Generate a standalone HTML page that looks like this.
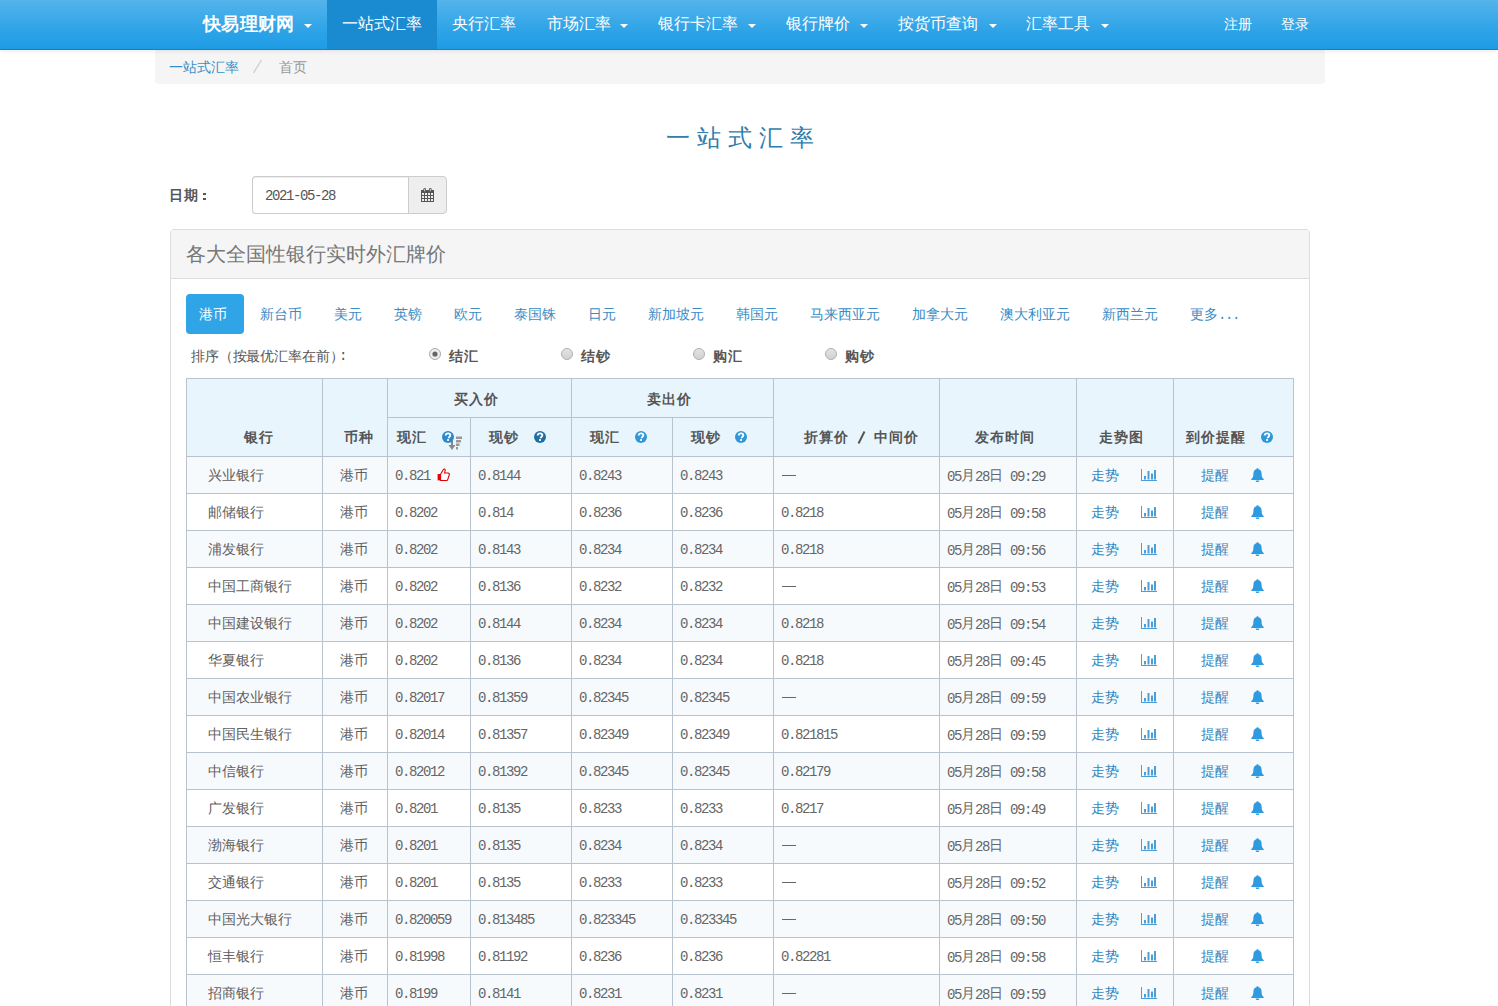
<!DOCTYPE html>
<html><head><meta charset="utf-8"><title>一站式汇率</title>
<style>
html,body{margin:0;padding:0;background:#fff;width:1498px;height:1006px;overflow:hidden;position:relative}
.t{position:absolute;white-space:nowrap}
.m{font-family:'Liberation Mono',monospace;font-size:14px;line-height:14px;letter-spacing:-1.4px}
.m .cj{font-family:'Liberation Sans',sans-serif;letter-spacing:0;position:relative;top:-1px}
.r{position:absolute;box-sizing:border-box}
svg{position:absolute}
</style></head><body>

<div class="r" style="left:0px;top:0px;width:1498px;height:50px;background:linear-gradient(#54b4eb,#2fa4e7 60%,#1d9ce5);border-bottom:1px solid #1a7dbf;box-shadow:0 1px 5px rgba(0,0,0,0.09);z-index:5"></div>
<div class="r" style="left:327px;top:0px;width:110px;height:49px;background:#1a8bd0;z-index:6"></div>
<div class="t" style="z-index:7;left:203px;top:15px;font-size:18px;line-height:18px;color:#fff;font-weight:600;font-family:'Liberation Sans',sans-serif;letter-spacing:0.3px">快易理财网</div>
<div class="r" style="z-index:7;left:304px;top:24px;width:0;height:0;border-left:4px solid transparent;border-right:4px solid transparent;border-top:4px solid #fff"></div>
<div class="t" style="z-index:7;left:342px;top:16px;font-size:16px;line-height:16px;color:#fff;font-weight:normal;font-family:'Liberation Sans',sans-serif;">一站式汇率</div>
<div class="t" style="z-index:7;left:452px;top:16px;font-size:16px;line-height:16px;color:#fff;font-weight:normal;font-family:'Liberation Sans',sans-serif;">央行汇率</div>
<div class="t" style="z-index:7;left:547px;top:16px;font-size:16px;line-height:16px;color:#fff;font-weight:normal;font-family:'Liberation Sans',sans-serif;">市场汇率</div>
<div class="r" style="z-index:7;left:620px;top:24px;width:0;height:0;border-left:4px solid transparent;border-right:4px solid transparent;border-top:4px solid #fff"></div>
<div class="t" style="z-index:7;left:658px;top:16px;font-size:16px;line-height:16px;color:#fff;font-weight:normal;font-family:'Liberation Sans',sans-serif;">银行卡汇率</div>
<div class="r" style="z-index:7;left:748px;top:24px;width:0;height:0;border-left:4px solid transparent;border-right:4px solid transparent;border-top:4px solid #fff"></div>
<div class="t" style="z-index:7;left:786px;top:16px;font-size:16px;line-height:16px;color:#fff;font-weight:normal;font-family:'Liberation Sans',sans-serif;">银行牌价</div>
<div class="r" style="z-index:7;left:860px;top:24px;width:0;height:0;border-left:4px solid transparent;border-right:4px solid transparent;border-top:4px solid #fff"></div>
<div class="t" style="z-index:7;left:898px;top:16px;font-size:16px;line-height:16px;color:#fff;font-weight:normal;font-family:'Liberation Sans',sans-serif;">按货币查询</div>
<div class="r" style="z-index:7;left:989px;top:24px;width:0;height:0;border-left:4px solid transparent;border-right:4px solid transparent;border-top:4px solid #fff"></div>
<div class="t" style="z-index:7;left:1026px;top:16px;font-size:16px;line-height:16px;color:#fff;font-weight:normal;font-family:'Liberation Sans',sans-serif;">汇率工具</div>
<div class="r" style="z-index:7;left:1101px;top:24px;width:0;height:0;border-left:4px solid transparent;border-right:4px solid transparent;border-top:4px solid #fff"></div>
<div class="t" style="z-index:7;left:1224px;top:17px;font-size:14px;line-height:14px;color:#fff;font-weight:normal;font-family:'Liberation Sans',sans-serif;">注册</div>
<div class="t" style="z-index:7;left:1281px;top:17px;font-size:14px;line-height:14px;color:#fff;font-weight:normal;font-family:'Liberation Sans',sans-serif;">登录</div>
<div class="r" style="left:155px;top:50px;width:1170px;height:34px;background:#f5f5f5;border-radius:0 0 4px 4px"></div>
<div class="t" style="z-index:7;left:169px;top:60px;font-size:14px;line-height:14px;color:#3a8fc8;font-weight:normal;font-family:'Liberation Sans',sans-serif;">一站式汇率</div>
<svg style="left:252px;top:59px;z-index:7" width="11" height="15" viewBox="0 0 11 15"><path d="M9.5 1 1.5 14" stroke="#d0d0d0" stroke-width="1.4"/></svg>
<div class="t" style="z-index:7;left:279px;top:60px;font-size:14px;line-height:14px;color:#999;font-weight:normal;font-family:'Liberation Sans',sans-serif;">首页</div>
<div class="t" style="z-index:7;left:666px;top:126px;font-size:24px;line-height:24px;color:#317eac;font-weight:normal;font-family:'Liberation Sans',sans-serif;letter-spacing:7px">一站式汇率</div>
<div class="t" style="z-index:7;left:169px;top:188px;font-size:14px;line-height:14px;color:#555;font-weight:bold;font-family:'Liberation Sans',sans-serif;letter-spacing:1px">日期</div>
<div class="r" style="left:203px;top:193px;width:3px;height:2px;background:#555"></div>
<div class="r" style="left:203px;top:198px;width:3px;height:2px;background:#555"></div>
<div class="r" style="left:252px;top:176px;width:157px;height:38px;background:#fff;border:1px solid #ccc;border-right:0;border-radius:4px 0 0 4px;box-shadow:inset 0 1px 1px rgba(0,0,0,.075)"></div>
<div class="r" style="left:408px;top:176px;width:39px;height:38px;background:#eee;border:1px solid #ccc;border-radius:0 4px 4px 0"></div>
<div class="t m" style="left:265px;top:189px;color:#555;">2021-05-28</div>
<svg style="left:421px;top:188px" width="13" height="14" viewBox="0 0 13 14"><rect x="0" y="2" width="13" height="12" fill="#555"/><rect x="2.4" y="0" width="2.6" height="4.2" rx="1.3" fill="#555"/><rect x="8" y="0" width="2.6" height="4.2" rx="1.3" fill="#555"/><rect x="3.3" y="0.9" width="0.8" height="2.4" fill="#eee"/><rect x="8.9" y="0.9" width="0.8" height="2.4" fill="#eee"/><rect x="1" y="5" width="2" height="2" fill="#eee"/><rect x="4" y="5" width="2" height="2" fill="#eee"/><rect x="7" y="5" width="2" height="2" fill="#eee"/><rect x="10" y="5" width="2" height="2" fill="#eee"/><rect x="1" y="8" width="2" height="2" fill="#eee"/><rect x="4" y="8" width="2" height="2" fill="#eee"/><rect x="7" y="8" width="2" height="2" fill="#eee"/><rect x="10" y="8" width="2" height="2" fill="#eee"/><rect x="1" y="11" width="2" height="2" fill="#eee"/><rect x="4" y="11" width="2" height="2" fill="#eee"/><rect x="7" y="11" width="2" height="2" fill="#eee"/><rect x="10" y="11" width="2" height="2" fill="#eee"/></svg>
<div class="r" style="left:170px;top:229px;width:1140px;height:800px;border:1px solid #ddd;border-radius:4px;background:#fff"></div>
<div class="r" style="left:171px;top:230px;width:1138px;height:49px;background:#f5f5f5;border-bottom:1px solid #ddd;border-radius:3px 3px 0 0"></div>
<div class="t" style="z-index:7;left:186px;top:244px;font-size:20px;line-height:20px;color:#777;font-weight:normal;font-family:'Liberation Sans',sans-serif;">各大全国性银行实时外汇牌价</div>
<div class="r" style="left:186px;top:294px;width:58px;height:40px;background:#2fa4e7;border-radius:4px"></div>
<div class="t" style="z-index:7;left:199px;top:307px;font-size:14px;line-height:14px;color:#fff;font-weight:normal;font-family:'Liberation Sans',sans-serif;">港币</div>
<div class="t" style="z-index:7;left:260px;top:307px;font-size:14px;line-height:14px;color:#3a8cc4;font-weight:normal;font-family:'Liberation Sans',sans-serif;">新台币</div>
<div class="t" style="z-index:7;left:334px;top:307px;font-size:14px;line-height:14px;color:#3a8cc4;font-weight:normal;font-family:'Liberation Sans',sans-serif;">美元</div>
<div class="t" style="z-index:7;left:394px;top:307px;font-size:14px;line-height:14px;color:#3a8cc4;font-weight:normal;font-family:'Liberation Sans',sans-serif;">英镑</div>
<div class="t" style="z-index:7;left:454px;top:307px;font-size:14px;line-height:14px;color:#3a8cc4;font-weight:normal;font-family:'Liberation Sans',sans-serif;">欧元</div>
<div class="t" style="z-index:7;left:514px;top:307px;font-size:14px;line-height:14px;color:#3a8cc4;font-weight:normal;font-family:'Liberation Sans',sans-serif;">泰国铢</div>
<div class="t" style="z-index:7;left:588px;top:307px;font-size:14px;line-height:14px;color:#3a8cc4;font-weight:normal;font-family:'Liberation Sans',sans-serif;">日元</div>
<div class="t" style="z-index:7;left:648px;top:307px;font-size:14px;line-height:14px;color:#3a8cc4;font-weight:normal;font-family:'Liberation Sans',sans-serif;">新加坡元</div>
<div class="t" style="z-index:7;left:736px;top:307px;font-size:14px;line-height:14px;color:#3a8cc4;font-weight:normal;font-family:'Liberation Sans',sans-serif;">韩国元</div>
<div class="t" style="z-index:7;left:810px;top:307px;font-size:14px;line-height:14px;color:#3a8cc4;font-weight:normal;font-family:'Liberation Sans',sans-serif;">马来西亚元</div>
<div class="t" style="z-index:7;left:912px;top:307px;font-size:14px;line-height:14px;color:#3a8cc4;font-weight:normal;font-family:'Liberation Sans',sans-serif;">加拿大元</div>
<div class="t" style="z-index:7;left:1000px;top:307px;font-size:14px;line-height:14px;color:#3a8cc4;font-weight:normal;font-family:'Liberation Sans',sans-serif;">澳大利亚元</div>
<div class="t" style="z-index:7;left:1102px;top:307px;font-size:14px;line-height:14px;color:#3a8cc4;font-weight:normal;font-family:'Liberation Sans',sans-serif;">新西兰元</div>
<div class="t" style="z-index:7;left:1190px;top:307px;font-size:14px;line-height:14px;color:#3a8cc4;font-weight:normal;font-family:'Liberation Sans',sans-serif;">更多<span style="font-family:Liberation Mono,monospace;letter-spacing:-1.4px">...</span></div>
<div class="t" style="z-index:7;left:191px;top:349px;font-size:14px;line-height:14px;color:#555;font-weight:normal;font-family:'Liberation Sans',sans-serif;letter-spacing:-0.15px">排序（按最优汇率在前）</div>
<div class="t" style="z-index:7;left:339px;top:349px;font-size:14px;line-height:14px;color:#555;font-weight:normal;font-family:'Liberation Mono',monospace;">:</div>
<svg style="left:429px;top:348px" width="12" height="12" viewBox="0 0 12 12"><circle cx="6" cy="6" r="5.5" fill="#eee" stroke="#aaa"/><circle cx="6" cy="6" r="2.6" fill="#666"/></svg>
<div class="t" style="z-index:7;left:449px;top:349px;font-size:14px;line-height:14px;color:#555;font-weight:bold;font-family:'Liberation Sans',sans-serif;letter-spacing:1px">结汇</div>
<svg style="left:561px;top:348px" width="12" height="12" viewBox="0 0 12 12"><defs><linearGradient id="g1" x1="0" y1="0" x2="0" y2="1"><stop offset="0" stop-color="#e4e4e4"/><stop offset="1" stop-color="#d0d0d0"/></linearGradient></defs><circle cx="6" cy="6" r="5.5" fill="url(#g1)" stroke="#b0b0b0"/></svg>
<div class="t" style="z-index:7;left:581px;top:349px;font-size:14px;line-height:14px;color:#555;font-weight:bold;font-family:'Liberation Sans',sans-serif;letter-spacing:1px">结钞</div>
<svg style="left:693px;top:348px" width="12" height="12" viewBox="0 0 12 12"><defs><linearGradient id="g2" x1="0" y1="0" x2="0" y2="1"><stop offset="0" stop-color="#e4e4e4"/><stop offset="1" stop-color="#d0d0d0"/></linearGradient></defs><circle cx="6" cy="6" r="5.5" fill="url(#g2)" stroke="#b0b0b0"/></svg>
<div class="t" style="z-index:7;left:713px;top:349px;font-size:14px;line-height:14px;color:#555;font-weight:bold;font-family:'Liberation Sans',sans-serif;letter-spacing:1px">购汇</div>
<svg style="left:825px;top:348px" width="12" height="12" viewBox="0 0 12 12"><defs><linearGradient id="g3" x1="0" y1="0" x2="0" y2="1"><stop offset="0" stop-color="#e4e4e4"/><stop offset="1" stop-color="#d0d0d0"/></linearGradient></defs><circle cx="6" cy="6" r="5.5" fill="url(#g3)" stroke="#b0b0b0"/></svg>
<div class="t" style="z-index:7;left:845px;top:349px;font-size:14px;line-height:14px;color:#555;font-weight:bold;font-family:'Liberation Sans',sans-serif;letter-spacing:1px">购钞</div>
<div class="r" style="left:186px;top:378px;width:1108px;height:78px;background:#e9f5fd"></div>
<div class="r" style="left:186px;top:456px;width:1108px;height:37px;background:#f7fafd"></div>
<div class="r" style="left:186px;top:493px;width:1108px;height:37px;background:#fff"></div>
<div class="r" style="left:186px;top:530px;width:1108px;height:37px;background:#f7fafd"></div>
<div class="r" style="left:186px;top:567px;width:1108px;height:37px;background:#fff"></div>
<div class="r" style="left:186px;top:604px;width:1108px;height:37px;background:#f7fafd"></div>
<div class="r" style="left:186px;top:641px;width:1108px;height:37px;background:#fff"></div>
<div class="r" style="left:186px;top:678px;width:1108px;height:37px;background:#f7fafd"></div>
<div class="r" style="left:186px;top:715px;width:1108px;height:37px;background:#fff"></div>
<div class="r" style="left:186px;top:752px;width:1108px;height:37px;background:#f7fafd"></div>
<div class="r" style="left:186px;top:789px;width:1108px;height:37px;background:#fff"></div>
<div class="r" style="left:186px;top:826px;width:1108px;height:37px;background:#f7fafd"></div>
<div class="r" style="left:186px;top:863px;width:1108px;height:37px;background:#fff"></div>
<div class="r" style="left:186px;top:900px;width:1108px;height:37px;background:#f7fafd"></div>
<div class="r" style="left:186px;top:937px;width:1108px;height:37px;background:#fff"></div>
<div class="r" style="left:186px;top:974px;width:1108px;height:37px;background:#f7fafd"></div>
<div class="r" style="left:186px;top:378px;width:1108px;height:1px;background:#b8c3cd"></div>
<div class="r" style="left:387px;top:417px;width:386px;height:1px;background:#b8c3cd"></div>
<div class="r" style="left:186px;top:456px;width:1108px;height:1px;background:#b8c3cd"></div>
<div class="r" style="left:186px;top:493px;width:1108px;height:1px;background:#b8c3cd"></div>
<div class="r" style="left:186px;top:530px;width:1108px;height:1px;background:#b8c3cd"></div>
<div class="r" style="left:186px;top:567px;width:1108px;height:1px;background:#b8c3cd"></div>
<div class="r" style="left:186px;top:604px;width:1108px;height:1px;background:#b8c3cd"></div>
<div class="r" style="left:186px;top:641px;width:1108px;height:1px;background:#b8c3cd"></div>
<div class="r" style="left:186px;top:678px;width:1108px;height:1px;background:#b8c3cd"></div>
<div class="r" style="left:186px;top:715px;width:1108px;height:1px;background:#b8c3cd"></div>
<div class="r" style="left:186px;top:752px;width:1108px;height:1px;background:#b8c3cd"></div>
<div class="r" style="left:186px;top:789px;width:1108px;height:1px;background:#b8c3cd"></div>
<div class="r" style="left:186px;top:826px;width:1108px;height:1px;background:#b8c3cd"></div>
<div class="r" style="left:186px;top:863px;width:1108px;height:1px;background:#b8c3cd"></div>
<div class="r" style="left:186px;top:900px;width:1108px;height:1px;background:#b8c3cd"></div>
<div class="r" style="left:186px;top:937px;width:1108px;height:1px;background:#b8c3cd"></div>
<div class="r" style="left:186px;top:974px;width:1108px;height:1px;background:#b8c3cd"></div>
<div class="r" style="left:186px;top:1011px;width:1108px;height:1px;background:#b8c3cd"></div>
<div class="r" style="left:186px;top:378px;width:1px;height:628px;background:#b8c3cd"></div>
<div class="r" style="left:322px;top:378px;width:1px;height:628px;background:#b8c3cd"></div>
<div class="r" style="left:387px;top:378px;width:1px;height:628px;background:#b8c3cd"></div>
<div class="r" style="left:470px;top:417px;width:1px;height:589px;background:#b8c3cd"></div>
<div class="r" style="left:571px;top:378px;width:1px;height:628px;background:#b8c3cd"></div>
<div class="r" style="left:672px;top:417px;width:1px;height:589px;background:#b8c3cd"></div>
<div class="r" style="left:773px;top:378px;width:1px;height:628px;background:#b8c3cd"></div>
<div class="r" style="left:939px;top:378px;width:1px;height:628px;background:#b8c3cd"></div>
<div class="r" style="left:1076px;top:378px;width:1px;height:628px;background:#b8c3cd"></div>
<div class="r" style="left:1173px;top:378px;width:1px;height:628px;background:#b8c3cd"></div>
<div class="r" style="left:1293px;top:378px;width:1px;height:628px;background:#b8c3cd"></div>
<div class="t" style="z-index:7;left:244px;top:430px;font-size:14px;line-height:14px;color:#555;font-weight:bold;font-family:'Liberation Sans',sans-serif;letter-spacing:1px">银行</div>
<div class="t" style="z-index:7;left:344px;top:430px;font-size:14px;line-height:14px;color:#555;font-weight:bold;font-family:'Liberation Sans',sans-serif;letter-spacing:1px">币种</div>
<div class="t" style="z-index:7;left:454px;top:392px;font-size:14px;line-height:14px;color:#555;font-weight:bold;font-family:'Liberation Sans',sans-serif;letter-spacing:1px">买入价</div>
<div class="t" style="z-index:7;left:647px;top:392px;font-size:14px;line-height:14px;color:#555;font-weight:bold;font-family:'Liberation Sans',sans-serif;letter-spacing:1px">卖出价</div>
<div class="t" style="z-index:7;left:397px;top:430px;font-size:14px;line-height:14px;color:#555;font-weight:bold;font-family:'Liberation Sans',sans-serif;letter-spacing:1px">现汇</div>
<svg style="left:447px;top:436px" width="16" height="15" viewBox="0 0 16 15"><path d="M4 0v9H1.5L5 14l3.5-5H6V0z" fill="#888"/><rect x="9" y="0.5" width="6" height="2.5" fill="#999"/><rect x="9" y="4" width="5" height="2.5" fill="#999"/><rect x="9" y="7.5" width="3.5" height="2.5" fill="#999"/><rect x="9" y="11" width="2" height="2.5" fill="#999"/></svg>
<svg style="left:442px;top:431px" width="12" height="12" viewBox="0 0 12 12"><circle cx="6" cy="6" r="6" fill="#2f88c8"/><path d="M3.7 4.5c.1-1.4 1-2.1 2.3-2.1 1.4 0 2.3.8 2.3 1.9 0 1.5-1.6 1.6-1.6 2.6v.3" stroke="#fff" stroke-width="1.9" fill="none"/><rect x="5.1" y="8.1" width="1.9" height="1.8" fill="#fff"/></svg>
<div class="t" style="z-index:7;left:489px;top:430px;font-size:14px;line-height:14px;color:#555;font-weight:bold;font-family:'Liberation Sans',sans-serif;letter-spacing:1px">现钞</div>
<svg style="left:534px;top:431px" width="12" height="12" viewBox="0 0 12 12"><circle cx="6" cy="6" r="6" fill="#1f6fa5"/><path d="M3.7 4.5c.1-1.4 1-2.1 2.3-2.1 1.4 0 2.3.8 2.3 1.9 0 1.5-1.6 1.6-1.6 2.6v.3" stroke="#fff" stroke-width="1.9" fill="none"/><rect x="5.1" y="8.1" width="1.9" height="1.8" fill="#fff"/></svg>
<div class="t" style="z-index:7;left:590px;top:430px;font-size:14px;line-height:14px;color:#555;font-weight:bold;font-family:'Liberation Sans',sans-serif;letter-spacing:1px">现汇</div>
<svg style="left:635px;top:431px" width="12" height="12" viewBox="0 0 12 12"><circle cx="6" cy="6" r="6" fill="#3196d8"/><path d="M3.7 4.5c.1-1.4 1-2.1 2.3-2.1 1.4 0 2.3.8 2.3 1.9 0 1.5-1.6 1.6-1.6 2.6v.3" stroke="#fff" stroke-width="1.9" fill="none"/><rect x="5.1" y="8.1" width="1.9" height="1.8" fill="#fff"/></svg>
<div class="t" style="z-index:7;left:691px;top:430px;font-size:14px;line-height:14px;color:#555;font-weight:bold;font-family:'Liberation Sans',sans-serif;letter-spacing:1px">现钞</div>
<svg style="left:735px;top:431px" width="12" height="12" viewBox="0 0 12 12"><circle cx="6" cy="6" r="6" fill="#3196d8"/><path d="M3.7 4.5c.1-1.4 1-2.1 2.3-2.1 1.4 0 2.3.8 2.3 1.9 0 1.5-1.6 1.6-1.6 2.6v.3" stroke="#fff" stroke-width="1.9" fill="none"/><rect x="5.1" y="8.1" width="1.9" height="1.8" fill="#fff"/></svg>
<div class="t" style="z-index:7;left:804px;top:430px;font-size:14px;line-height:14px;color:#555;font-weight:bold;font-family:'Liberation Sans',sans-serif;letter-spacing:1px">折算价</div>
<svg style="left:857px;top:431px" width="9" height="13" viewBox="0 0 9 13"><path d="M7.5 0.5 1.5 12.5" stroke="#555" stroke-width="2"/></svg>
<div class="t" style="z-index:7;left:874px;top:430px;font-size:14px;line-height:14px;color:#555;font-weight:bold;font-family:'Liberation Sans',sans-serif;letter-spacing:1px">中间价</div>
<div class="t" style="z-index:7;left:975px;top:430px;font-size:14px;line-height:14px;color:#555;font-weight:bold;font-family:'Liberation Sans',sans-serif;letter-spacing:1px">发布时间</div>
<div class="t" style="z-index:7;left:1099px;top:430px;font-size:14px;line-height:14px;color:#555;font-weight:bold;font-family:'Liberation Sans',sans-serif;letter-spacing:1px">走势图</div>
<div class="t" style="z-index:7;left:1186px;top:430px;font-size:14px;line-height:14px;color:#555;font-weight:bold;font-family:'Liberation Sans',sans-serif;letter-spacing:1px">到价提醒</div>
<svg style="left:1261px;top:431px" width="12" height="12" viewBox="0 0 12 12"><circle cx="6" cy="6" r="6" fill="#3196d8"/><path d="M3.7 4.5c.1-1.4 1-2.1 2.3-2.1 1.4 0 2.3.8 2.3 1.9 0 1.5-1.6 1.6-1.6 2.6v.3" stroke="#fff" stroke-width="1.9" fill="none"/><rect x="5.1" y="8.1" width="1.9" height="1.8" fill="#fff"/></svg>
<div class="t" style="z-index:7;left:208px;top:468px;font-size:14px;line-height:14px;color:#606060;font-weight:normal;font-family:'Liberation Sans',sans-serif;">兴业银行</div>
<div class="t" style="z-index:7;left:340px;top:468px;font-size:14px;line-height:14px;color:#606060;font-weight:normal;font-family:'Liberation Sans',sans-serif;">港币</div>
<div class="t m" style="left:395px;top:469px;color:#666;">0.821</div>
<svg style="left:437px;top:468px" width="13" height="13" viewBox="0 0 13 13"><path d="M0.6 6h2.6v6.4H0.6z" fill="#e00"/><path d="M3.6 6.2 6.4 1.6c.4-.9 1.9-.7 1.8.6L7.6 5h3.4c1.2 0 1.6 1 1.3 1.8l-1.6 4.8c-.3.7-.8 1-1.4 1H3.6z" fill="#fff" stroke="#d00" stroke-width="1.1"/></svg>
<div class="t m" style="left:478px;top:469px;color:#666;">0.8144</div>
<div class="t m" style="left:579px;top:469px;color:#666;">0.8243</div>
<div class="t m" style="left:680px;top:469px;color:#666;">0.8243</div>
<div class="r" style="left:782px;top:475px;width:14px;height:1px;background:#666"></div>
<div class="t m" style="left:947px;top:469px;color:#666;">05<span class="cj">月</span>28<span class="cj">日</span>&#160;09:29</div>
<div class="t" style="z-index:7;left:1091px;top:468px;font-size:14px;line-height:14px;color:#3585bd;font-weight:normal;font-family:'Liberation Sans',sans-serif;">走势</div>
<svg style="left:1141px;top:469px" width="16" height="12" viewBox="0 0 16 12"><path d="M0 0h1v11H16V12H0z" fill="#4a9fd8"/><rect x="3" y="7" width="2" height="3.5" fill="#4a9fd8"/><rect x="6.5" y="2" width="2" height="8.5" fill="#4a9fd8"/><rect x="10" y="4.5" width="2" height="6" fill="#4a9fd8"/><rect x="13" y="1" width="2" height="9.5" fill="#4a9fd8"/></svg>
<div class="t" style="z-index:7;left:1201px;top:468px;font-size:14px;line-height:14px;color:#3585bd;font-weight:normal;font-family:'Liberation Sans',sans-serif;">提醒</div>
<svg style="left:1251px;top:468px" width="13" height="14" viewBox="0 0 13 14"><path d="M6.5 0.2c.7 0 1.1.5 1.1 1.1 2 .5 3 2.2 3 4.4 0 3 .8 4.3 2.2 5.6v.8H.2v-.8C1.6 10 2.4 8.7 2.4 5.7c0-2.2 1-3.9 3-4.4 0-.6.4-1.1 1.1-1.1z" fill="#2e9be0"/><path d="M4.6 12.6h3.8a1.9 1.6 0 0 1-3.8 0z" fill="#2e9be0"/></svg>
<div class="t" style="z-index:7;left:208px;top:505px;font-size:14px;line-height:14px;color:#606060;font-weight:normal;font-family:'Liberation Sans',sans-serif;">邮储银行</div>
<div class="t" style="z-index:7;left:340px;top:505px;font-size:14px;line-height:14px;color:#606060;font-weight:normal;font-family:'Liberation Sans',sans-serif;">港币</div>
<div class="t m" style="left:395px;top:506px;color:#666;">0.8202</div>
<div class="t m" style="left:478px;top:506px;color:#666;">0.814</div>
<div class="t m" style="left:579px;top:506px;color:#666;">0.8236</div>
<div class="t m" style="left:680px;top:506px;color:#666;">0.8236</div>
<div class="t m" style="left:781px;top:506px;color:#666;">0.8218</div>
<div class="t m" style="left:947px;top:506px;color:#666;">05<span class="cj">月</span>28<span class="cj">日</span>&#160;09:58</div>
<div class="t" style="z-index:7;left:1091px;top:505px;font-size:14px;line-height:14px;color:#3585bd;font-weight:normal;font-family:'Liberation Sans',sans-serif;">走势</div>
<svg style="left:1141px;top:506px" width="16" height="12" viewBox="0 0 16 12"><path d="M0 0h1v11H16V12H0z" fill="#4a9fd8"/><rect x="3" y="7" width="2" height="3.5" fill="#4a9fd8"/><rect x="6.5" y="2" width="2" height="8.5" fill="#4a9fd8"/><rect x="10" y="4.5" width="2" height="6" fill="#4a9fd8"/><rect x="13" y="1" width="2" height="9.5" fill="#4a9fd8"/></svg>
<div class="t" style="z-index:7;left:1201px;top:505px;font-size:14px;line-height:14px;color:#3585bd;font-weight:normal;font-family:'Liberation Sans',sans-serif;">提醒</div>
<svg style="left:1251px;top:505px" width="13" height="14" viewBox="0 0 13 14"><path d="M6.5 0.2c.7 0 1.1.5 1.1 1.1 2 .5 3 2.2 3 4.4 0 3 .8 4.3 2.2 5.6v.8H.2v-.8C1.6 10 2.4 8.7 2.4 5.7c0-2.2 1-3.9 3-4.4 0-.6.4-1.1 1.1-1.1z" fill="#2e9be0"/><path d="M4.6 12.6h3.8a1.9 1.6 0 0 1-3.8 0z" fill="#2e9be0"/></svg>
<div class="t" style="z-index:7;left:208px;top:542px;font-size:14px;line-height:14px;color:#606060;font-weight:normal;font-family:'Liberation Sans',sans-serif;">浦发银行</div>
<div class="t" style="z-index:7;left:340px;top:542px;font-size:14px;line-height:14px;color:#606060;font-weight:normal;font-family:'Liberation Sans',sans-serif;">港币</div>
<div class="t m" style="left:395px;top:543px;color:#666;">0.8202</div>
<div class="t m" style="left:478px;top:543px;color:#666;">0.8143</div>
<div class="t m" style="left:579px;top:543px;color:#666;">0.8234</div>
<div class="t m" style="left:680px;top:543px;color:#666;">0.8234</div>
<div class="t m" style="left:781px;top:543px;color:#666;">0.8218</div>
<div class="t m" style="left:947px;top:543px;color:#666;">05<span class="cj">月</span>28<span class="cj">日</span>&#160;09:56</div>
<div class="t" style="z-index:7;left:1091px;top:542px;font-size:14px;line-height:14px;color:#3585bd;font-weight:normal;font-family:'Liberation Sans',sans-serif;">走势</div>
<svg style="left:1141px;top:543px" width="16" height="12" viewBox="0 0 16 12"><path d="M0 0h1v11H16V12H0z" fill="#4a9fd8"/><rect x="3" y="7" width="2" height="3.5" fill="#4a9fd8"/><rect x="6.5" y="2" width="2" height="8.5" fill="#4a9fd8"/><rect x="10" y="4.5" width="2" height="6" fill="#4a9fd8"/><rect x="13" y="1" width="2" height="9.5" fill="#4a9fd8"/></svg>
<div class="t" style="z-index:7;left:1201px;top:542px;font-size:14px;line-height:14px;color:#3585bd;font-weight:normal;font-family:'Liberation Sans',sans-serif;">提醒</div>
<svg style="left:1251px;top:542px" width="13" height="14" viewBox="0 0 13 14"><path d="M6.5 0.2c.7 0 1.1.5 1.1 1.1 2 .5 3 2.2 3 4.4 0 3 .8 4.3 2.2 5.6v.8H.2v-.8C1.6 10 2.4 8.7 2.4 5.7c0-2.2 1-3.9 3-4.4 0-.6.4-1.1 1.1-1.1z" fill="#2e9be0"/><path d="M4.6 12.6h3.8a1.9 1.6 0 0 1-3.8 0z" fill="#2e9be0"/></svg>
<div class="t" style="z-index:7;left:208px;top:579px;font-size:14px;line-height:14px;color:#606060;font-weight:normal;font-family:'Liberation Sans',sans-serif;">中国工商银行</div>
<div class="t" style="z-index:7;left:340px;top:579px;font-size:14px;line-height:14px;color:#606060;font-weight:normal;font-family:'Liberation Sans',sans-serif;">港币</div>
<div class="t m" style="left:395px;top:580px;color:#666;">0.8202</div>
<div class="t m" style="left:478px;top:580px;color:#666;">0.8136</div>
<div class="t m" style="left:579px;top:580px;color:#666;">0.8232</div>
<div class="t m" style="left:680px;top:580px;color:#666;">0.8232</div>
<div class="r" style="left:782px;top:586px;width:14px;height:1px;background:#666"></div>
<div class="t m" style="left:947px;top:580px;color:#666;">05<span class="cj">月</span>28<span class="cj">日</span>&#160;09:53</div>
<div class="t" style="z-index:7;left:1091px;top:579px;font-size:14px;line-height:14px;color:#3585bd;font-weight:normal;font-family:'Liberation Sans',sans-serif;">走势</div>
<svg style="left:1141px;top:580px" width="16" height="12" viewBox="0 0 16 12"><path d="M0 0h1v11H16V12H0z" fill="#4a9fd8"/><rect x="3" y="7" width="2" height="3.5" fill="#4a9fd8"/><rect x="6.5" y="2" width="2" height="8.5" fill="#4a9fd8"/><rect x="10" y="4.5" width="2" height="6" fill="#4a9fd8"/><rect x="13" y="1" width="2" height="9.5" fill="#4a9fd8"/></svg>
<div class="t" style="z-index:7;left:1201px;top:579px;font-size:14px;line-height:14px;color:#3585bd;font-weight:normal;font-family:'Liberation Sans',sans-serif;">提醒</div>
<svg style="left:1251px;top:579px" width="13" height="14" viewBox="0 0 13 14"><path d="M6.5 0.2c.7 0 1.1.5 1.1 1.1 2 .5 3 2.2 3 4.4 0 3 .8 4.3 2.2 5.6v.8H.2v-.8C1.6 10 2.4 8.7 2.4 5.7c0-2.2 1-3.9 3-4.4 0-.6.4-1.1 1.1-1.1z" fill="#2e9be0"/><path d="M4.6 12.6h3.8a1.9 1.6 0 0 1-3.8 0z" fill="#2e9be0"/></svg>
<div class="t" style="z-index:7;left:208px;top:616px;font-size:14px;line-height:14px;color:#606060;font-weight:normal;font-family:'Liberation Sans',sans-serif;">中国建设银行</div>
<div class="t" style="z-index:7;left:340px;top:616px;font-size:14px;line-height:14px;color:#606060;font-weight:normal;font-family:'Liberation Sans',sans-serif;">港币</div>
<div class="t m" style="left:395px;top:617px;color:#666;">0.8202</div>
<div class="t m" style="left:478px;top:617px;color:#666;">0.8144</div>
<div class="t m" style="left:579px;top:617px;color:#666;">0.8234</div>
<div class="t m" style="left:680px;top:617px;color:#666;">0.8234</div>
<div class="t m" style="left:781px;top:617px;color:#666;">0.8218</div>
<div class="t m" style="left:947px;top:617px;color:#666;">05<span class="cj">月</span>28<span class="cj">日</span>&#160;09:54</div>
<div class="t" style="z-index:7;left:1091px;top:616px;font-size:14px;line-height:14px;color:#3585bd;font-weight:normal;font-family:'Liberation Sans',sans-serif;">走势</div>
<svg style="left:1141px;top:617px" width="16" height="12" viewBox="0 0 16 12"><path d="M0 0h1v11H16V12H0z" fill="#4a9fd8"/><rect x="3" y="7" width="2" height="3.5" fill="#4a9fd8"/><rect x="6.5" y="2" width="2" height="8.5" fill="#4a9fd8"/><rect x="10" y="4.5" width="2" height="6" fill="#4a9fd8"/><rect x="13" y="1" width="2" height="9.5" fill="#4a9fd8"/></svg>
<div class="t" style="z-index:7;left:1201px;top:616px;font-size:14px;line-height:14px;color:#3585bd;font-weight:normal;font-family:'Liberation Sans',sans-serif;">提醒</div>
<svg style="left:1251px;top:616px" width="13" height="14" viewBox="0 0 13 14"><path d="M6.5 0.2c.7 0 1.1.5 1.1 1.1 2 .5 3 2.2 3 4.4 0 3 .8 4.3 2.2 5.6v.8H.2v-.8C1.6 10 2.4 8.7 2.4 5.7c0-2.2 1-3.9 3-4.4 0-.6.4-1.1 1.1-1.1z" fill="#2e9be0"/><path d="M4.6 12.6h3.8a1.9 1.6 0 0 1-3.8 0z" fill="#2e9be0"/></svg>
<div class="t" style="z-index:7;left:208px;top:653px;font-size:14px;line-height:14px;color:#606060;font-weight:normal;font-family:'Liberation Sans',sans-serif;">华夏银行</div>
<div class="t" style="z-index:7;left:340px;top:653px;font-size:14px;line-height:14px;color:#606060;font-weight:normal;font-family:'Liberation Sans',sans-serif;">港币</div>
<div class="t m" style="left:395px;top:654px;color:#666;">0.8202</div>
<div class="t m" style="left:478px;top:654px;color:#666;">0.8136</div>
<div class="t m" style="left:579px;top:654px;color:#666;">0.8234</div>
<div class="t m" style="left:680px;top:654px;color:#666;">0.8234</div>
<div class="t m" style="left:781px;top:654px;color:#666;">0.8218</div>
<div class="t m" style="left:947px;top:654px;color:#666;">05<span class="cj">月</span>28<span class="cj">日</span>&#160;09:45</div>
<div class="t" style="z-index:7;left:1091px;top:653px;font-size:14px;line-height:14px;color:#3585bd;font-weight:normal;font-family:'Liberation Sans',sans-serif;">走势</div>
<svg style="left:1141px;top:654px" width="16" height="12" viewBox="0 0 16 12"><path d="M0 0h1v11H16V12H0z" fill="#4a9fd8"/><rect x="3" y="7" width="2" height="3.5" fill="#4a9fd8"/><rect x="6.5" y="2" width="2" height="8.5" fill="#4a9fd8"/><rect x="10" y="4.5" width="2" height="6" fill="#4a9fd8"/><rect x="13" y="1" width="2" height="9.5" fill="#4a9fd8"/></svg>
<div class="t" style="z-index:7;left:1201px;top:653px;font-size:14px;line-height:14px;color:#3585bd;font-weight:normal;font-family:'Liberation Sans',sans-serif;">提醒</div>
<svg style="left:1251px;top:653px" width="13" height="14" viewBox="0 0 13 14"><path d="M6.5 0.2c.7 0 1.1.5 1.1 1.1 2 .5 3 2.2 3 4.4 0 3 .8 4.3 2.2 5.6v.8H.2v-.8C1.6 10 2.4 8.7 2.4 5.7c0-2.2 1-3.9 3-4.4 0-.6.4-1.1 1.1-1.1z" fill="#2e9be0"/><path d="M4.6 12.6h3.8a1.9 1.6 0 0 1-3.8 0z" fill="#2e9be0"/></svg>
<div class="t" style="z-index:7;left:208px;top:690px;font-size:14px;line-height:14px;color:#606060;font-weight:normal;font-family:'Liberation Sans',sans-serif;">中国农业银行</div>
<div class="t" style="z-index:7;left:340px;top:690px;font-size:14px;line-height:14px;color:#606060;font-weight:normal;font-family:'Liberation Sans',sans-serif;">港币</div>
<div class="t m" style="left:395px;top:691px;color:#666;">0.82017</div>
<div class="t m" style="left:478px;top:691px;color:#666;">0.81359</div>
<div class="t m" style="left:579px;top:691px;color:#666;">0.82345</div>
<div class="t m" style="left:680px;top:691px;color:#666;">0.82345</div>
<div class="r" style="left:782px;top:697px;width:14px;height:1px;background:#666"></div>
<div class="t m" style="left:947px;top:691px;color:#666;">05<span class="cj">月</span>28<span class="cj">日</span>&#160;09:59</div>
<div class="t" style="z-index:7;left:1091px;top:690px;font-size:14px;line-height:14px;color:#3585bd;font-weight:normal;font-family:'Liberation Sans',sans-serif;">走势</div>
<svg style="left:1141px;top:691px" width="16" height="12" viewBox="0 0 16 12"><path d="M0 0h1v11H16V12H0z" fill="#4a9fd8"/><rect x="3" y="7" width="2" height="3.5" fill="#4a9fd8"/><rect x="6.5" y="2" width="2" height="8.5" fill="#4a9fd8"/><rect x="10" y="4.5" width="2" height="6" fill="#4a9fd8"/><rect x="13" y="1" width="2" height="9.5" fill="#4a9fd8"/></svg>
<div class="t" style="z-index:7;left:1201px;top:690px;font-size:14px;line-height:14px;color:#3585bd;font-weight:normal;font-family:'Liberation Sans',sans-serif;">提醒</div>
<svg style="left:1251px;top:690px" width="13" height="14" viewBox="0 0 13 14"><path d="M6.5 0.2c.7 0 1.1.5 1.1 1.1 2 .5 3 2.2 3 4.4 0 3 .8 4.3 2.2 5.6v.8H.2v-.8C1.6 10 2.4 8.7 2.4 5.7c0-2.2 1-3.9 3-4.4 0-.6.4-1.1 1.1-1.1z" fill="#2e9be0"/><path d="M4.6 12.6h3.8a1.9 1.6 0 0 1-3.8 0z" fill="#2e9be0"/></svg>
<div class="t" style="z-index:7;left:208px;top:727px;font-size:14px;line-height:14px;color:#606060;font-weight:normal;font-family:'Liberation Sans',sans-serif;">中国民生银行</div>
<div class="t" style="z-index:7;left:340px;top:727px;font-size:14px;line-height:14px;color:#606060;font-weight:normal;font-family:'Liberation Sans',sans-serif;">港币</div>
<div class="t m" style="left:395px;top:728px;color:#666;">0.82014</div>
<div class="t m" style="left:478px;top:728px;color:#666;">0.81357</div>
<div class="t m" style="left:579px;top:728px;color:#666;">0.82349</div>
<div class="t m" style="left:680px;top:728px;color:#666;">0.82349</div>
<div class="t m" style="left:781px;top:728px;color:#666;">0.821815</div>
<div class="t m" style="left:947px;top:728px;color:#666;">05<span class="cj">月</span>28<span class="cj">日</span>&#160;09:59</div>
<div class="t" style="z-index:7;left:1091px;top:727px;font-size:14px;line-height:14px;color:#3585bd;font-weight:normal;font-family:'Liberation Sans',sans-serif;">走势</div>
<svg style="left:1141px;top:728px" width="16" height="12" viewBox="0 0 16 12"><path d="M0 0h1v11H16V12H0z" fill="#4a9fd8"/><rect x="3" y="7" width="2" height="3.5" fill="#4a9fd8"/><rect x="6.5" y="2" width="2" height="8.5" fill="#4a9fd8"/><rect x="10" y="4.5" width="2" height="6" fill="#4a9fd8"/><rect x="13" y="1" width="2" height="9.5" fill="#4a9fd8"/></svg>
<div class="t" style="z-index:7;left:1201px;top:727px;font-size:14px;line-height:14px;color:#3585bd;font-weight:normal;font-family:'Liberation Sans',sans-serif;">提醒</div>
<svg style="left:1251px;top:727px" width="13" height="14" viewBox="0 0 13 14"><path d="M6.5 0.2c.7 0 1.1.5 1.1 1.1 2 .5 3 2.2 3 4.4 0 3 .8 4.3 2.2 5.6v.8H.2v-.8C1.6 10 2.4 8.7 2.4 5.7c0-2.2 1-3.9 3-4.4 0-.6.4-1.1 1.1-1.1z" fill="#2e9be0"/><path d="M4.6 12.6h3.8a1.9 1.6 0 0 1-3.8 0z" fill="#2e9be0"/></svg>
<div class="t" style="z-index:7;left:208px;top:764px;font-size:14px;line-height:14px;color:#606060;font-weight:normal;font-family:'Liberation Sans',sans-serif;">中信银行</div>
<div class="t" style="z-index:7;left:340px;top:764px;font-size:14px;line-height:14px;color:#606060;font-weight:normal;font-family:'Liberation Sans',sans-serif;">港币</div>
<div class="t m" style="left:395px;top:765px;color:#666;">0.82012</div>
<div class="t m" style="left:478px;top:765px;color:#666;">0.81392</div>
<div class="t m" style="left:579px;top:765px;color:#666;">0.82345</div>
<div class="t m" style="left:680px;top:765px;color:#666;">0.82345</div>
<div class="t m" style="left:781px;top:765px;color:#666;">0.82179</div>
<div class="t m" style="left:947px;top:765px;color:#666;">05<span class="cj">月</span>28<span class="cj">日</span>&#160;09:58</div>
<div class="t" style="z-index:7;left:1091px;top:764px;font-size:14px;line-height:14px;color:#3585bd;font-weight:normal;font-family:'Liberation Sans',sans-serif;">走势</div>
<svg style="left:1141px;top:765px" width="16" height="12" viewBox="0 0 16 12"><path d="M0 0h1v11H16V12H0z" fill="#4a9fd8"/><rect x="3" y="7" width="2" height="3.5" fill="#4a9fd8"/><rect x="6.5" y="2" width="2" height="8.5" fill="#4a9fd8"/><rect x="10" y="4.5" width="2" height="6" fill="#4a9fd8"/><rect x="13" y="1" width="2" height="9.5" fill="#4a9fd8"/></svg>
<div class="t" style="z-index:7;left:1201px;top:764px;font-size:14px;line-height:14px;color:#3585bd;font-weight:normal;font-family:'Liberation Sans',sans-serif;">提醒</div>
<svg style="left:1251px;top:764px" width="13" height="14" viewBox="0 0 13 14"><path d="M6.5 0.2c.7 0 1.1.5 1.1 1.1 2 .5 3 2.2 3 4.4 0 3 .8 4.3 2.2 5.6v.8H.2v-.8C1.6 10 2.4 8.7 2.4 5.7c0-2.2 1-3.9 3-4.4 0-.6.4-1.1 1.1-1.1z" fill="#2e9be0"/><path d="M4.6 12.6h3.8a1.9 1.6 0 0 1-3.8 0z" fill="#2e9be0"/></svg>
<div class="t" style="z-index:7;left:208px;top:801px;font-size:14px;line-height:14px;color:#606060;font-weight:normal;font-family:'Liberation Sans',sans-serif;">广发银行</div>
<div class="t" style="z-index:7;left:340px;top:801px;font-size:14px;line-height:14px;color:#606060;font-weight:normal;font-family:'Liberation Sans',sans-serif;">港币</div>
<div class="t m" style="left:395px;top:802px;color:#666;">0.8201</div>
<div class="t m" style="left:478px;top:802px;color:#666;">0.8135</div>
<div class="t m" style="left:579px;top:802px;color:#666;">0.8233</div>
<div class="t m" style="left:680px;top:802px;color:#666;">0.8233</div>
<div class="t m" style="left:781px;top:802px;color:#666;">0.8217</div>
<div class="t m" style="left:947px;top:802px;color:#666;">05<span class="cj">月</span>28<span class="cj">日</span>&#160;09:49</div>
<div class="t" style="z-index:7;left:1091px;top:801px;font-size:14px;line-height:14px;color:#3585bd;font-weight:normal;font-family:'Liberation Sans',sans-serif;">走势</div>
<svg style="left:1141px;top:802px" width="16" height="12" viewBox="0 0 16 12"><path d="M0 0h1v11H16V12H0z" fill="#4a9fd8"/><rect x="3" y="7" width="2" height="3.5" fill="#4a9fd8"/><rect x="6.5" y="2" width="2" height="8.5" fill="#4a9fd8"/><rect x="10" y="4.5" width="2" height="6" fill="#4a9fd8"/><rect x="13" y="1" width="2" height="9.5" fill="#4a9fd8"/></svg>
<div class="t" style="z-index:7;left:1201px;top:801px;font-size:14px;line-height:14px;color:#3585bd;font-weight:normal;font-family:'Liberation Sans',sans-serif;">提醒</div>
<svg style="left:1251px;top:801px" width="13" height="14" viewBox="0 0 13 14"><path d="M6.5 0.2c.7 0 1.1.5 1.1 1.1 2 .5 3 2.2 3 4.4 0 3 .8 4.3 2.2 5.6v.8H.2v-.8C1.6 10 2.4 8.7 2.4 5.7c0-2.2 1-3.9 3-4.4 0-.6.4-1.1 1.1-1.1z" fill="#2e9be0"/><path d="M4.6 12.6h3.8a1.9 1.6 0 0 1-3.8 0z" fill="#2e9be0"/></svg>
<div class="t" style="z-index:7;left:208px;top:838px;font-size:14px;line-height:14px;color:#606060;font-weight:normal;font-family:'Liberation Sans',sans-serif;">渤海银行</div>
<div class="t" style="z-index:7;left:340px;top:838px;font-size:14px;line-height:14px;color:#606060;font-weight:normal;font-family:'Liberation Sans',sans-serif;">港币</div>
<div class="t m" style="left:395px;top:839px;color:#666;">0.8201</div>
<div class="t m" style="left:478px;top:839px;color:#666;">0.8135</div>
<div class="t m" style="left:579px;top:839px;color:#666;">0.8234</div>
<div class="t m" style="left:680px;top:839px;color:#666;">0.8234</div>
<div class="r" style="left:782px;top:845px;width:14px;height:1px;background:#666"></div>
<div class="t m" style="left:947px;top:839px;color:#666;">05<span class="cj">月</span>28<span class="cj">日</span></div>
<div class="t" style="z-index:7;left:1091px;top:838px;font-size:14px;line-height:14px;color:#3585bd;font-weight:normal;font-family:'Liberation Sans',sans-serif;">走势</div>
<svg style="left:1141px;top:839px" width="16" height="12" viewBox="0 0 16 12"><path d="M0 0h1v11H16V12H0z" fill="#4a9fd8"/><rect x="3" y="7" width="2" height="3.5" fill="#4a9fd8"/><rect x="6.5" y="2" width="2" height="8.5" fill="#4a9fd8"/><rect x="10" y="4.5" width="2" height="6" fill="#4a9fd8"/><rect x="13" y="1" width="2" height="9.5" fill="#4a9fd8"/></svg>
<div class="t" style="z-index:7;left:1201px;top:838px;font-size:14px;line-height:14px;color:#3585bd;font-weight:normal;font-family:'Liberation Sans',sans-serif;">提醒</div>
<svg style="left:1251px;top:838px" width="13" height="14" viewBox="0 0 13 14"><path d="M6.5 0.2c.7 0 1.1.5 1.1 1.1 2 .5 3 2.2 3 4.4 0 3 .8 4.3 2.2 5.6v.8H.2v-.8C1.6 10 2.4 8.7 2.4 5.7c0-2.2 1-3.9 3-4.4 0-.6.4-1.1 1.1-1.1z" fill="#2e9be0"/><path d="M4.6 12.6h3.8a1.9 1.6 0 0 1-3.8 0z" fill="#2e9be0"/></svg>
<div class="t" style="z-index:7;left:208px;top:875px;font-size:14px;line-height:14px;color:#606060;font-weight:normal;font-family:'Liberation Sans',sans-serif;">交通银行</div>
<div class="t" style="z-index:7;left:340px;top:875px;font-size:14px;line-height:14px;color:#606060;font-weight:normal;font-family:'Liberation Sans',sans-serif;">港币</div>
<div class="t m" style="left:395px;top:876px;color:#666;">0.8201</div>
<div class="t m" style="left:478px;top:876px;color:#666;">0.8135</div>
<div class="t m" style="left:579px;top:876px;color:#666;">0.8233</div>
<div class="t m" style="left:680px;top:876px;color:#666;">0.8233</div>
<div class="r" style="left:782px;top:882px;width:14px;height:1px;background:#666"></div>
<div class="t m" style="left:947px;top:876px;color:#666;">05<span class="cj">月</span>28<span class="cj">日</span>&#160;09:52</div>
<div class="t" style="z-index:7;left:1091px;top:875px;font-size:14px;line-height:14px;color:#3585bd;font-weight:normal;font-family:'Liberation Sans',sans-serif;">走势</div>
<svg style="left:1141px;top:876px" width="16" height="12" viewBox="0 0 16 12"><path d="M0 0h1v11H16V12H0z" fill="#4a9fd8"/><rect x="3" y="7" width="2" height="3.5" fill="#4a9fd8"/><rect x="6.5" y="2" width="2" height="8.5" fill="#4a9fd8"/><rect x="10" y="4.5" width="2" height="6" fill="#4a9fd8"/><rect x="13" y="1" width="2" height="9.5" fill="#4a9fd8"/></svg>
<div class="t" style="z-index:7;left:1201px;top:875px;font-size:14px;line-height:14px;color:#3585bd;font-weight:normal;font-family:'Liberation Sans',sans-serif;">提醒</div>
<svg style="left:1251px;top:875px" width="13" height="14" viewBox="0 0 13 14"><path d="M6.5 0.2c.7 0 1.1.5 1.1 1.1 2 .5 3 2.2 3 4.4 0 3 .8 4.3 2.2 5.6v.8H.2v-.8C1.6 10 2.4 8.7 2.4 5.7c0-2.2 1-3.9 3-4.4 0-.6.4-1.1 1.1-1.1z" fill="#2e9be0"/><path d="M4.6 12.6h3.8a1.9 1.6 0 0 1-3.8 0z" fill="#2e9be0"/></svg>
<div class="t" style="z-index:7;left:208px;top:912px;font-size:14px;line-height:14px;color:#606060;font-weight:normal;font-family:'Liberation Sans',sans-serif;">中国光大银行</div>
<div class="t" style="z-index:7;left:340px;top:912px;font-size:14px;line-height:14px;color:#606060;font-weight:normal;font-family:'Liberation Sans',sans-serif;">港币</div>
<div class="t m" style="left:395px;top:913px;color:#666;">0.820059</div>
<div class="t m" style="left:478px;top:913px;color:#666;">0.813485</div>
<div class="t m" style="left:579px;top:913px;color:#666;">0.823345</div>
<div class="t m" style="left:680px;top:913px;color:#666;">0.823345</div>
<div class="r" style="left:782px;top:919px;width:14px;height:1px;background:#666"></div>
<div class="t m" style="left:947px;top:913px;color:#666;">05<span class="cj">月</span>28<span class="cj">日</span>&#160;09:50</div>
<div class="t" style="z-index:7;left:1091px;top:912px;font-size:14px;line-height:14px;color:#3585bd;font-weight:normal;font-family:'Liberation Sans',sans-serif;">走势</div>
<svg style="left:1141px;top:913px" width="16" height="12" viewBox="0 0 16 12"><path d="M0 0h1v11H16V12H0z" fill="#4a9fd8"/><rect x="3" y="7" width="2" height="3.5" fill="#4a9fd8"/><rect x="6.5" y="2" width="2" height="8.5" fill="#4a9fd8"/><rect x="10" y="4.5" width="2" height="6" fill="#4a9fd8"/><rect x="13" y="1" width="2" height="9.5" fill="#4a9fd8"/></svg>
<div class="t" style="z-index:7;left:1201px;top:912px;font-size:14px;line-height:14px;color:#3585bd;font-weight:normal;font-family:'Liberation Sans',sans-serif;">提醒</div>
<svg style="left:1251px;top:912px" width="13" height="14" viewBox="0 0 13 14"><path d="M6.5 0.2c.7 0 1.1.5 1.1 1.1 2 .5 3 2.2 3 4.4 0 3 .8 4.3 2.2 5.6v.8H.2v-.8C1.6 10 2.4 8.7 2.4 5.7c0-2.2 1-3.9 3-4.4 0-.6.4-1.1 1.1-1.1z" fill="#2e9be0"/><path d="M4.6 12.6h3.8a1.9 1.6 0 0 1-3.8 0z" fill="#2e9be0"/></svg>
<div class="t" style="z-index:7;left:208px;top:949px;font-size:14px;line-height:14px;color:#606060;font-weight:normal;font-family:'Liberation Sans',sans-serif;">恒丰银行</div>
<div class="t" style="z-index:7;left:340px;top:949px;font-size:14px;line-height:14px;color:#606060;font-weight:normal;font-family:'Liberation Sans',sans-serif;">港币</div>
<div class="t m" style="left:395px;top:950px;color:#666;">0.81998</div>
<div class="t m" style="left:478px;top:950px;color:#666;">0.81192</div>
<div class="t m" style="left:579px;top:950px;color:#666;">0.8236</div>
<div class="t m" style="left:680px;top:950px;color:#666;">0.8236</div>
<div class="t m" style="left:781px;top:950px;color:#666;">0.82281</div>
<div class="t m" style="left:947px;top:950px;color:#666;">05<span class="cj">月</span>28<span class="cj">日</span>&#160;09:58</div>
<div class="t" style="z-index:7;left:1091px;top:949px;font-size:14px;line-height:14px;color:#3585bd;font-weight:normal;font-family:'Liberation Sans',sans-serif;">走势</div>
<svg style="left:1141px;top:950px" width="16" height="12" viewBox="0 0 16 12"><path d="M0 0h1v11H16V12H0z" fill="#4a9fd8"/><rect x="3" y="7" width="2" height="3.5" fill="#4a9fd8"/><rect x="6.5" y="2" width="2" height="8.5" fill="#4a9fd8"/><rect x="10" y="4.5" width="2" height="6" fill="#4a9fd8"/><rect x="13" y="1" width="2" height="9.5" fill="#4a9fd8"/></svg>
<div class="t" style="z-index:7;left:1201px;top:949px;font-size:14px;line-height:14px;color:#3585bd;font-weight:normal;font-family:'Liberation Sans',sans-serif;">提醒</div>
<svg style="left:1251px;top:949px" width="13" height="14" viewBox="0 0 13 14"><path d="M6.5 0.2c.7 0 1.1.5 1.1 1.1 2 .5 3 2.2 3 4.4 0 3 .8 4.3 2.2 5.6v.8H.2v-.8C1.6 10 2.4 8.7 2.4 5.7c0-2.2 1-3.9 3-4.4 0-.6.4-1.1 1.1-1.1z" fill="#2e9be0"/><path d="M4.6 12.6h3.8a1.9 1.6 0 0 1-3.8 0z" fill="#2e9be0"/></svg>
<div class="t" style="z-index:7;left:208px;top:986px;font-size:14px;line-height:14px;color:#606060;font-weight:normal;font-family:'Liberation Sans',sans-serif;">招商银行</div>
<div class="t" style="z-index:7;left:340px;top:986px;font-size:14px;line-height:14px;color:#606060;font-weight:normal;font-family:'Liberation Sans',sans-serif;">港币</div>
<div class="t m" style="left:395px;top:987px;color:#666;">0.8199</div>
<div class="t m" style="left:478px;top:987px;color:#666;">0.8141</div>
<div class="t m" style="left:579px;top:987px;color:#666;">0.8231</div>
<div class="t m" style="left:680px;top:987px;color:#666;">0.8231</div>
<div class="r" style="left:782px;top:993px;width:14px;height:1px;background:#666"></div>
<div class="t m" style="left:947px;top:987px;color:#666;">05<span class="cj">月</span>28<span class="cj">日</span>&#160;09:59</div>
<div class="t" style="z-index:7;left:1091px;top:986px;font-size:14px;line-height:14px;color:#3585bd;font-weight:normal;font-family:'Liberation Sans',sans-serif;">走势</div>
<svg style="left:1141px;top:987px" width="16" height="12" viewBox="0 0 16 12"><path d="M0 0h1v11H16V12H0z" fill="#4a9fd8"/><rect x="3" y="7" width="2" height="3.5" fill="#4a9fd8"/><rect x="6.5" y="2" width="2" height="8.5" fill="#4a9fd8"/><rect x="10" y="4.5" width="2" height="6" fill="#4a9fd8"/><rect x="13" y="1" width="2" height="9.5" fill="#4a9fd8"/></svg>
<div class="t" style="z-index:7;left:1201px;top:986px;font-size:14px;line-height:14px;color:#3585bd;font-weight:normal;font-family:'Liberation Sans',sans-serif;">提醒</div>
<svg style="left:1251px;top:986px" width="13" height="14" viewBox="0 0 13 14"><path d="M6.5 0.2c.7 0 1.1.5 1.1 1.1 2 .5 3 2.2 3 4.4 0 3 .8 4.3 2.2 5.6v.8H.2v-.8C1.6 10 2.4 8.7 2.4 5.7c0-2.2 1-3.9 3-4.4 0-.6.4-1.1 1.1-1.1z" fill="#2e9be0"/><path d="M4.6 12.6h3.8a1.9 1.6 0 0 1-3.8 0z" fill="#2e9be0"/></svg>
</body></html>
